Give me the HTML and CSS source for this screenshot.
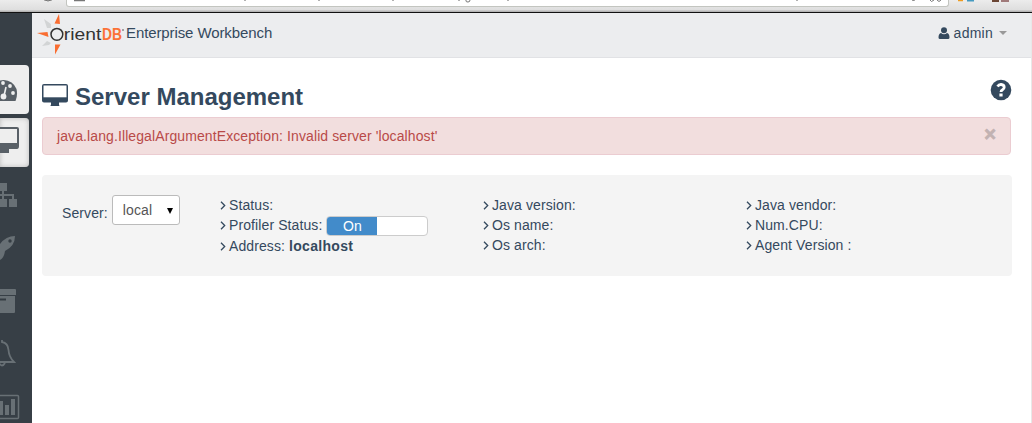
FILE: index.html
```
<!DOCTYPE html>
<html lang="en">
<head>
<meta charset="utf-8">
<title>OrientDB Enterprise Workbench</title>
<link rel="stylesheet" href="styles.css">
</head>
<body>
<div class="chrome">
  <div class="address"></div>
  <svg class="chrome-marks" width="1032" height="11" viewBox="0 0 1032 11">
    <path d="M44 0h8M45 0l3 1 3-1" stroke="#777" fill="none"/>
    <path d="M74 0h11" stroke="#777" stroke-width="2.5"/>
    <path d="M245 0v1M319 0v1M393 0v1M459 0v1M508 0v1M797 0v1" stroke="#888" stroke-width="1.3"/>
    <path d="M466 0v1q0 1 2 1t2-2M912 0q0 1 3 0" stroke="#777" fill="none"/>
    <path d="M930 0q1 3 4 0M937 0q2 3 4 0" stroke="#777" fill="none"/>
    <path d="M958 0h5" stroke="#ee9c22" stroke-width="2.5"/><path d="M967 0h7" stroke="#459ac0" stroke-width="3"/>
    <path d="M992 0h7" stroke="#6b4635" stroke-width="4"/><path d="M1001 0h8" stroke="#a07a7a" stroke-width="4"/>
  </svg>
</div>
<div class="app">
  <nav class="side">
    <a class="item dash"><svg width="32" height="48" viewBox="0 0 32 48"><path d="M-8 36q-3-6-1-12a13.500 13.500 0 0 1 25.500 0q1.500 6-1 12z" fill="#596067"/><g fill="#eee"><circle cx="3" cy="18" r="1.900"/><circle cx="10" cy="21" r="1.900"/><circle cx="13" cy="28" r="1.900"/><circle cx="3.500" cy="31.500" r="2.900"/></g><path d="M4 31l2-9" stroke="#eee" stroke-width="1.600"/></svg></a>
    <a class="item active"><svg width="32" height="48" viewBox="0 0 32 48"><path d="M-8 9h25q2 0 2 2v17q0 3-2 3H9v4H-5z" fill="#596067"/><path d="M0 11h17v14H0z" fill="#eee"/></svg></a>
    <a class="item"><svg width="32" height="48" viewBox="0 0 32 48"><path d="M0 12h7v8H0zM0 28h7v8H0zM9 28h8v8H9z" fill="#687075"/><path d="M3 20v8M0 24h13v4" stroke="#687075" stroke-width="2" fill="none"/></svg></a>
    <a class="item"><svg width="32" height="48" viewBox="0 0 32 48"><path d="M15 12Q6 12 0 20v16q4-2 5-9Q15 22 15 12z" fill="#687075"/><circle cx="10" cy="17" r="1.700" fill="#343c43"/></svg></a>
    <a class="item"><svg width="32" height="48" viewBox="0 0 32 48"><path d="M0 12h15q1 0 1 1v5H0zM0 19h15v16q0 1-1 1H0z" fill="#687075"/><path d="M0 22.500h6" stroke="#343c43" stroke-width="2"/></svg></a>
    <a class="item"><svg width="32" height="48" viewBox="0 0 32 48"><path d="M2 10v2Q8 13 8.500 20t5.500 12H-9M-1 33q3 5 6 0" stroke="#687075" stroke-width="1.800" fill="none"/></svg></a>
    <a class="item"><svg width="32" height="48" viewBox="0 0 32 48"><path d="M0 12.500h17.500q1 0 1 1v21q0 1-1 1H0" stroke="#687075" stroke-width="1.500" fill="none"/><path d="M0 18h3v14H0zM5 22h4v10H5zM11 16h4v16h-4z" fill="#687075"/></svg></a>
  </nav>
  <main class="main">
    <header class="top">
      <svg class="logo" width="88" height="44" viewBox="36 13 88 44">
        <path d="M54.500 23.500L59 14l1 10zM37 33l10.500-1 1 5zM55 44.500h5.500l-5.500 10z" fill="#f96d31"/>
        <path d="M44 19l7 5v4h-4zM42 46l5-5 4 2-2 2z" fill="#d2d4d5"/>
        <circle cx="56.900" cy="34.300" r="5.900" fill="none" stroke="#333" stroke-width="1.500"/>
        <text x="63.800" y="40.300" font-size="16" fill="#333" textLength="37.500" lengthAdjust="spacingAndGlyphs">rient</text>
        <text x="102" y="40.300" font-size="16" font-weight="bold" fill="#fb7137" textLength="20" lengthAdjust="spacingAndGlyphs">DB</text>
        <circle cx="123" cy="30" r="1" fill="#888"/>
      </svg>
      <span class="brand">Enterprise Workbench</span>
      <span class="user"><svg width="12" height="13" viewBox="0 0 12 13"><circle cx="6" cy="3.200" r="3" fill="#34495e"/><path d="M3 6q3 2.500 6 0 2.500.5 2.500 4.500 0 1.500-1.500 1.500H2Q.5 12 .5 10.500.5 6.500 3 6z" fill="#34495e"/></svg><span>admin</span><i class="caret"></i></span>
    </header>
    <section class="heading">
      <svg width="26" height="24" viewBox="0 0 26 24"><path d="M2 0h22q2 0 2 2v14.500q0 2-2 2h-7v2q0 1.500 1 1.500H8q1-.5 1-1.500v-2H2q-2 0-2-2V2q0-2 2-2z" fill="#34495e"/><path d="M1.500 1.500h23V13.300h-23z" fill="#fff"/></svg>
      <h1>Server Management</h1>
      <svg class="help" width="22" height="22" viewBox="0 0 22 22"><circle cx="11" cy="11" r="10.300" fill="#34495e"/><path d="M7.500 7.500Q9 5.300 11.200 5.500q3 .3 3 2.800 0 1.500-1.700 2.500-1.500.8-1.500 2.300" fill="none" stroke="#fff" stroke-width="2.800"/><path d="M9.400 14.500h3.200v3H9.400z" fill="#fff"/></svg>
    </section>
    <div class="alert"><span>java.lang.IllegalArgumentException: Invalid server 'localhost'</span><b>×</b></div>
    <section class="panel">
      <div class="server"><span>Server:</span><span class="select">local<i></i></span></div>
      <ul>
        <li><svg class="chev" viewBox="0 0 6 9"><path d="M1 .8l3.700 3.700L1 8.200"/></svg>Status:</li>
        <li><svg class="chev" viewBox="0 0 6 9"><path d="M1 .8l3.700 3.700L1 8.200"/></svg>Profiler Status:<span class="switch"><span>On</span></span></li>
        <li class="addr"><svg class="chev" viewBox="0 0 6 9"><path d="M1 .8l3.700 3.700L1 8.200"/></svg>Address:&nbsp;<strong>localhost</strong></li>
      </ul>
      <ul>
        <li><svg class="chev" viewBox="0 0 6 9"><path d="M1 .8l3.700 3.700L1 8.200"/></svg>Java version:</li>
        <li><svg class="chev" viewBox="0 0 6 9"><path d="M1 .8l3.700 3.700L1 8.200"/></svg>Os name:</li>
        <li><svg class="chev" viewBox="0 0 6 9"><path d="M1 .8l3.700 3.700L1 8.200"/></svg>Os arch:</li>
      </ul>
      <ul>
        <li><svg class="chev" viewBox="0 0 6 9"><path d="M1 .8l3.700 3.700L1 8.200"/></svg>Java vendor:</li>
        <li><svg class="chev" viewBox="0 0 6 9"><path d="M1 .8l3.700 3.700L1 8.200"/></svg>Num.CPU:</li>
        <li><svg class="chev" viewBox="0 0 6 9"><path d="M1 .8l3.700 3.700L1 8.200"/></svg>Agent Version :</li>
      </ul>
    </section>
  </main>
</div>
</body>
</html>
```
FILE: styles.css
```
* { box-sizing: border-box; }
body { margin: 0; height: 423px; overflow: hidden; display: flex; flex-direction: column; font: 14px/20px "Liberation Sans", Arial, sans-serif; letter-spacing: .1px; color: #34495e; background: #fff; }
svg { display: block; flex: none; }
.chrome { position: relative; height: 13px; flex: none; background: linear-gradient(#ececec, #dedede 10px, #b5b5b5 11px, #b5b5b5 12px, #111 12px); }
.address { margin-left: 66px; width: 883px; height: 7px; background: #fff; border: 1px solid #c3c5c0; border-top: 0; border-radius: 0 0 3px 3px; }
.chrome-marks { position: absolute; left: 0; top: 0; }
.app { flex: 1; display: flex; min-height: 0; }
.side { width: 32px; flex: none; background: #373f46; padding-top: 52px; display: flex; flex-direction: column; gap: 4px; }
.item { height: 49px; width: 29px; flex: none; overflow: hidden; border-radius: 0 4px 4px 0; }
.dash, .active { background: #eee; }
.active { box-shadow: inset 0 0 5px #bbb; }
.main { flex: 1; min-width: 0; border-right: 1px solid #e8e8e8; }
.top { height: 45px; background: #ecedef; border-bottom: 1px solid #e1e2e5; display: flex; padding: 0 24px 0 4px; }
.logo { letter-spacing: 0; overflow: visible; }
.brand { margin: 10px 0 0 2px; font-size: 15px; letter-spacing: -.1px; }
.user { margin: 10px 0 0 auto; display: flex; align-items: center; height: 20px; gap: 4px; }
.user span { letter-spacing: .25px; }
.caret { border: 4px solid transparent; border-top-color: #999; border-bottom: 0; margin-left: 2px; }
.heading { display: flex; height: 59px; padding: 26px 20px 0 10px; }
h1 { margin: 0 0 0 7px; font-size: 24px; line-height: 26px; font-weight: bold; letter-spacing: 0; }
.help { margin: -5px -1px 0 auto; }
.alert { margin: 0 20px 0 10px; height: 38px; border: 1px solid #ebccd1; border-radius: 4px; background: #f2dede; color: #b94a48; padding: 8px 14px; display: flex; justify-content: space-between; }
.alert b { font-size: 20px; line-height: 16px; color: #c2b2b2; -webkit-text-stroke: .8px #c2b2b2; }
.panel { margin: 20px 19px 0 10px; height: 101px; border-radius: 4px; background: #f4f4f4; padding: 20px 0 0 20px; display: flex; }
.server { width: 158px; flex: none; display: flex; gap: 4px; }
.server > span:first-child { margin-top: 8px; }
.select { width: 68px; height: 30px; background: #fff; border: 1px solid #bbb; border-radius: 3px; padding: 4px 6px 0 10px; display: flex; justify-content: space-between; color: #555; }
.select i { margin-top: 8px; height: 0; border: 3.5px solid transparent; border-top: 6px solid #000; border-bottom: 0; }
ul { list-style: none; margin: 0; padding: 0; width: 263px; flex: none; }
ul:last-child { width: 200px; }
li { height: 20px; display: flex; align-items: center; white-space: nowrap; }
.addr { margin-top: 1px; }
.addr strong { letter-spacing: .3px; }
.chev { width: 6px; height: 9px; margin-right: 3px; fill: none; stroke: #34495e; stroke-width: 1.3; }
.switch { width: 102px; height: 20px; margin: 2px 0 0 4px; border: 1px solid #ccc; border-radius: 4px; background: #fff; overflow: hidden; }
.switch span { display: block; width: 50px; height: 18px; background: #428bca; color: #fff; text-align: center; line-height: 18px; }
```
